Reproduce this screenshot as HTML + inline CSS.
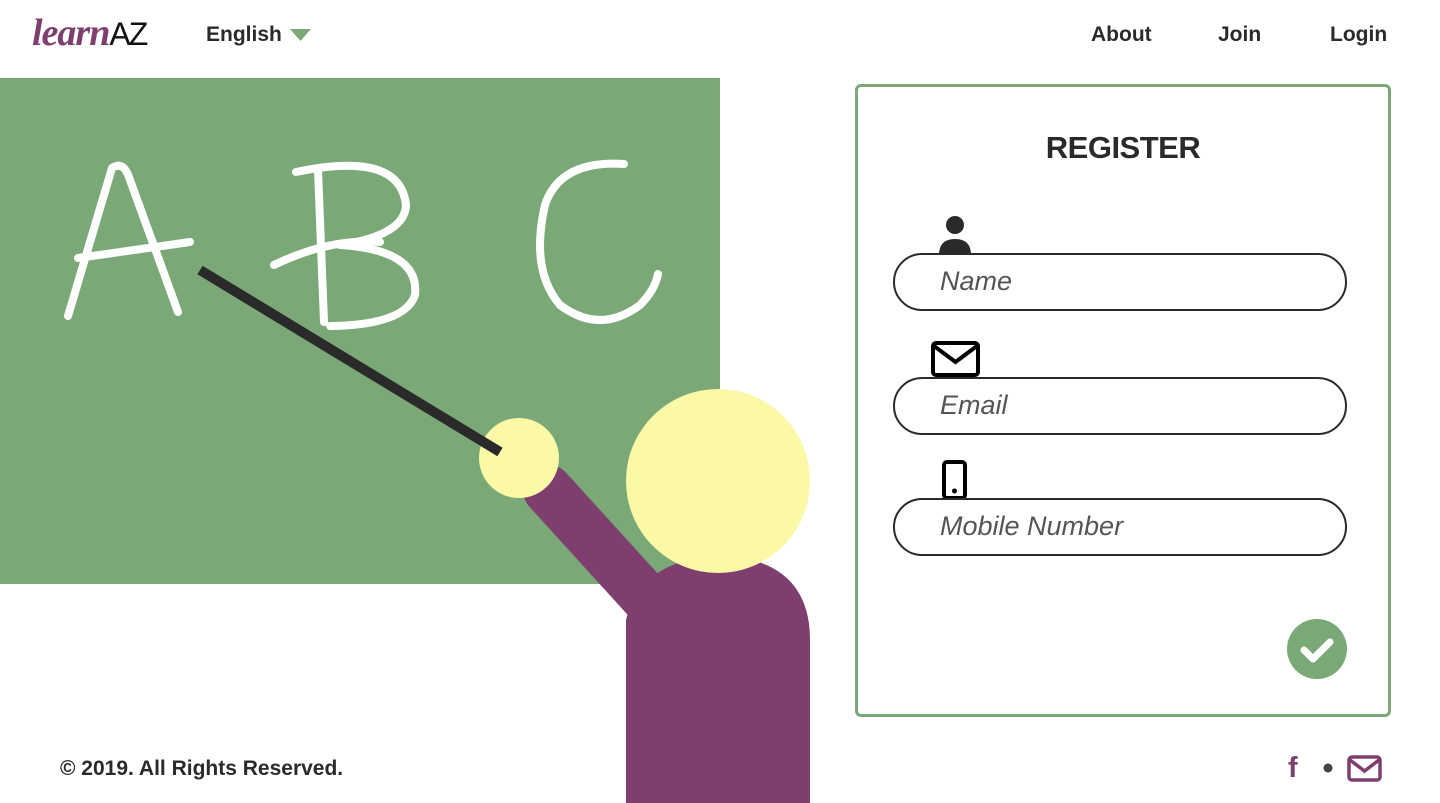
<!DOCTYPE html>
<html><head><meta charset="utf-8"><style>
body{margin:0;width:1440px;height:803px;overflow:hidden;background:#fff;font-family:"Liberation Sans",sans-serif;position:relative}
.a{position:absolute}
.nav{font-weight:bold;font-size:21px;color:#2a2a2a}
.inp{position:absolute;left:893px;width:450px;height:54px;border:2px solid #2a2a2a;border-radius:29px;background:#fff}
.inp span{position:absolute;left:45px;top:11px;font-style:italic;font-size:27px;color:#555}
</style></head><body>
<svg class="a" style="left:0;top:0" width="1440" height="803">
<rect x="0" y="78" width="720" height="506" fill="#7aa977"/>
<g fill="none" stroke="#fff" stroke-width="8" stroke-linecap="round" stroke-linejoin="round">
<path d="M68 316 L112 168 Q124 160 130 180 L178 312"/>
<path d="M78 258 L190 242"/>
<path d="M318 170 L324 322"/>
<path d="M296 172 Q400 150 406 205 Q405 235 340 245 Q420 250 415 295 Q405 325 330 326"/>
<path d="M274 265 Q330 238 380 242"/>
<path d="M624 164 Q560 160 545 205 Q530 270 560 305 Q600 335 640 305 Q655 290 658 274"/>
</g>
<path d="M548 490 L648 600" stroke="#7e3f6f" stroke-width="50" stroke-linecap="round"/>
<path d="M626 803 L626 620 Q640 560 720 555 Q810 560 810 640 L810 803 Z" fill="#7e3f6f"/>
<circle cx="718" cy="481" r="92" fill="#fbf8a6"/>
<circle cx="519" cy="458" r="40" fill="#fbf8a6"/>
<path d="M200 270 L500 452" stroke="#2a2a2a" stroke-width="10"/>
</svg>
<div class="a" style="left:32px;top:11px;font-size:38px;font-style:italic;font-weight:bold;font-family:'Liberation Serif',serif;color:#7e3f6f;letter-spacing:-1px">learn<span style="color:#111;font-style:normal;font-weight:normal;font-family:'Liberation Sans',sans-serif;font-size:32px;letter-spacing:-2px">AZ</span></div>
<div class="a nav" style="left:206px;top:23px">English</div>
<svg class="a" style="left:290px;top:29px" width="22" height="14"><path d="M0 0H21L10.5 12Z" fill="#7aa977"/></svg>
<div class="a nav" style="left:1091px;top:23px">About</div>
<div class="a nav" style="left:1218px;top:23px">Join</div>
<div class="a nav" style="left:1330px;top:23px">Login</div>
<div class="a" style="left:855px;top:84px;width:530px;height:627px;border:3px solid #7aa977;border-radius:6px"></div>
<div class="a" style="left:855px;top:130px;width:536px;text-align:center;font-weight:bold;font-size:31px;color:#2a2a2a;letter-spacing:-0.5px">REGISTER</div>
<svg class="a" style="left:938px;top:215px" width="36" height="40"><circle cx="17" cy="10" r="9" fill="#2a2a2a"/><path d="M1 40 Q1 24 17 24 Q33 24 33 40Z" fill="#2a2a2a"/></svg>
<div class="inp" style="top:253px"><span>Name</span></div>
<svg class="a" style="left:930px;top:340px" width="52" height="38"><rect x="3" y="3" width="45" height="32" rx="3" fill="none" stroke="#000" stroke-width="4"/><path d="M4 6 L25.5 22 L47 6" fill="none" stroke="#000" stroke-width="4"/></svg>
<div class="inp" style="top:377px"><span>Email</span></div>
<svg class="a" style="left:942px;top:460px" width="26" height="40"><rect x="2" y="2" width="21" height="36" rx="3" fill="none" stroke="#000" stroke-width="4"/><circle cx="12.5" cy="31" r="2.5" fill="#000"/></svg>
<div class="inp" style="top:498px"><span>Mobile Number</span></div>
<svg class="a" style="left:1287px;top:619px" width="60" height="60"><circle cx="30" cy="30" r="30" fill="#7aa977"/><path d="M17 31 L26 40 L43 23" fill="none" stroke="#fff" stroke-width="7" stroke-linecap="round" stroke-linejoin="round"/></svg>
<div class="a" style="left:60px;top:757px;font-weight:bold;font-size:21px;color:#2a2a2a">© 2019. All Rights Reserved.</div>
<div class="a" style="left:1288px;top:752px;font-weight:bold;font-size:29px;color:#7e3f6f">f</div>
<svg class="a" style="left:1322px;top:762px" width="12" height="12"><circle cx="6" cy="6" r="4.5" fill="#444"/></svg>
<svg class="a" style="left:1347px;top:755px" width="36" height="27"><rect x="2" y="2" width="31" height="23" rx="3" fill="none" stroke="#7e3f6f" stroke-width="3.5"/><path d="M3 5 L17.5 16 L32 5" fill="none" stroke="#7e3f6f" stroke-width="3.5"/></svg>
</body></html>
